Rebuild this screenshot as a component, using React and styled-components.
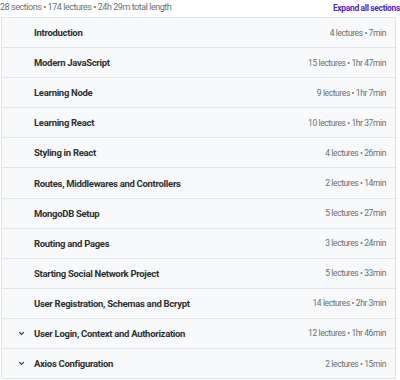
import React from "react";
import styled, { createGlobalStyle } from "styled-components";

const Global = createGlobalStyle`
  html, body { margin: 0; padding: 0; background: #fff; }
  body { font-family: Roboto, "Liberation Sans", Arial, sans-serif; -webkit-font-smoothing: antialiased; }
`;

const Page = styled.div`
  width: 400px;
  height: 380px;
  overflow: hidden;
`;

const Header = styled.div`
  display: flex;
  align-items: center;
  justify-content: space-between;
  height: 17px;
`;

const Summary = styled.span`
  font-size: 9px;
  letter-spacing: -0.45px;
  color: #6a6f73;
  margin-top: -3px;
`;

const Expand = styled.button`
  border: 0;
  background: none;
  padding: 0;
  margin-top: -2px;
  font-family: inherit;
  font-size: 8.5px;
  letter-spacing: -0.35px;
  font-weight: 700;
  color: #5624d0;
  cursor: pointer;
`;

const List = styled.div`
  margin-left: 1px;
  width: 393px;
  border: 1px solid #e3e6e9;
  border-bottom: 0;
`;

const Row = styled.div`
  display: flex;
  align-items: center;
  height: 29.1px;
  background: #f7f9fa;
  border-bottom: 1px solid #e3e6e9;
  padding: 0 9px 0 16px;
`;

const Chevron = styled.span`
  width: 16px;
  display: flex;
  align-items: center;
  visibility: ${(p) => (p.$show ? "visible" : "hidden")};
`;

const Title = styled.span`
  flex: 1;
  font-size: 9.5px;
  letter-spacing: -0.3px;
  font-weight: 700;
  color: #2d2f31;
`;

const Meta = styled.span`
  font-size: 8.5px;
  letter-spacing: -0.4px;
  color: #6a6f73;
`;

const sections = [
  ["Introduction", "4 lectures • 7min"],
  ["Modern JavaScript", "15 lectures • 1hr 47min"],
  ["Learning Node", "9 lectures • 1hr 7min"],
  ["Learning React", "10 lectures • 1hr 37min"],
  ["Styling in React", "4 lectures • 26min"],
  ["Routes, Middlewares and Controllers", "2 lectures • 14min"],
  ["MongoDB Setup", "5 lectures • 27min"],
  ["Routing and Pages", "3 lectures • 24min"],
  ["Starting Social Network Project", "5 lectures • 33min"],
  ["User Registration, Schemas and Bcrypt", "14 lectures • 2hr 3min"],
  ["User Login, Context and Authorization", "12 lectures • 1hr 46min", true],
  ["Axios Configuration", "2 lectures • 15min", true],
];

export default function App() {
  return (
    <Page>
      <Global />
      <Header>
        <Summary>28 sections • 174 lectures • 24h 29m total length</Summary>
        <Expand>Expand all sections</Expand>
      </Header>
      <List>
        {sections.map(([t, m, c]) => (
          <Row key={t}>
            <Chevron $show={c}>
              <svg width="7" height="5" viewBox="0 0 7 5">
                <path d="M1.2 1.2 L3.5 3.5 L5.8 1.2" fill="none" stroke="#2d2f31" strokeWidth="1.2" />
              </svg>
            </Chevron>
            <Title>{t}</Title>
            <Meta>{m}</Meta>
          </Row>
        ))}
      </List>
    </Page>
  );
}
